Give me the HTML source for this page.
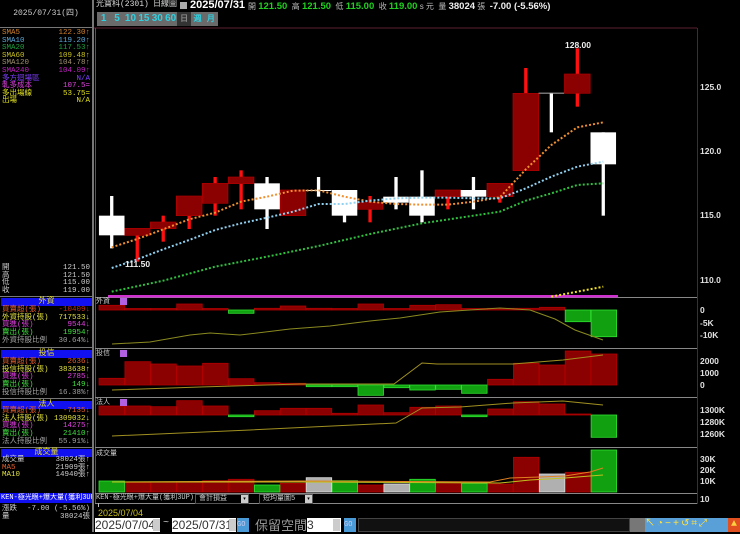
<!DOCTYPE html>
<html><head><meta charset="utf-8">
<style>
*{margin:0;padding:0;box-sizing:border-box}
body{width:740px;height:532px;background:#000;overflow:hidden;position:relative;font-family:"Liberation Mono","Noto Sans CJK TC",monospace;font-size:8px;color:#ddd}
.a{position:absolute;white-space:nowrap;line-height:8px}
.r{position:absolute;left:2px;width:88px;height:8px;line-height:8px;font-size:7.5px;white-space:nowrap}
.r span{position:absolute;right:0;top:0}
.hd{position:absolute;left:1px;width:91px;height:8px;background:#1010f0;color:#e8e020;text-align:center;font-size:8px;line-height:8px}
.btn{position:absolute;top:12px;height:14px;width:13.4px;background:#6a6a6a;color:#30d0e0;font:bold 10px "Liberation Sans",sans-serif;text-align:center;line-height:14px}
.ax{position:absolute;left:700px;font:bold 8.5px "Liberation Sans",sans-serif;color:#e0e0e0;line-height:9px}
</style></head><body>

<!-- left panel -->
<div class="a" style="left:0;top:10px;width:92px;text-align:center;color:#ccc;font-size:8px">2025/07/31(四)</div>
<div class="a" style="left:0;top:27px;width:93px;height:1px;background:#777"></div>
<div class="a" style="left:92px;top:0;width:2px;height:532px;background:#777"></div>

<div class="r" style="top:29px;color:#d08030">SMA5<span>122.30↑</span></div>
<div class="r" style="top:37px;color:#5aa8d8">SMA10<span>119.20↑</span></div>
<div class="r" style="top:44px;color:#20a040">SMA20<span>117.53↑</span></div>
<div class="r" style="top:52px;color:#c8c020">SMA60<span>109.48↑</span></div>
<div class="r" style="top:59px;color:#a09070">SMA120<span>104.78↑</span></div>
<div class="r" style="top:67px;color:#c020c0">SMA240<span>104.09↑</span></div>
<div class="r" style="top:75px;color:#8040ff">多方迴場區<span>N/A</span></div>
<div class="r" style="top:82px;color:#e040e0">軋多成本<span>107.5=</span></div>
<div class="r" style="top:90px;color:#e0e020">多出場線<span>53.75=</span></div>
<div class="r" style="top:97px;color:#e0e020">出場<span>N/A</span></div>

<div class="r" style="top:264px;color:#ccc">開<span>121.50</span></div>
<div class="r" style="top:272px;color:#ccc">高<span>121.50</span></div>
<div class="r" style="top:279px;color:#ccc">低<span>115.00</span></div>
<div class="r" style="top:287px;color:#ccc">收<span>119.00</span></div>
<div class="a" style="left:0;top:296px;width:92px;height:1px;background:#777"></div>

<div class="hd" style="top:298px">外資</div>
<div class="r" style="top:306px;color:#e06030">買賣超(張)<span style="color:#c03020">-10409↓</span></div>
<div class="r" style="top:314px;color:#e0e040">外資持股(張)<span style="color:#e0e040">717533↓</span></div>
<div class="r" style="top:321px;color:#e040e0">買進(張)<span>9544↓</span></div>
<div class="r" style="top:329px;color:#40e040">賣出(張)<span>19954↑</span></div>
<div class="r" style="top:337px;color:#a0a0a0">外資持股比例<span>30.64%↓</span></div>
<div class="a" style="left:0;top:347px;width:92px;height:1px;background:#777"></div>

<div class="hd" style="top:350px">投信</div>
<div class="r" style="top:358px;color:#e06030">買賣超(張)<span>2636↓</span></div>
<div class="r" style="top:366px;color:#e0e040">投信持股(張)<span>383638↑</span></div>
<div class="r" style="top:373px;color:#e040e0">買進(張)<span>2785↓</span></div>
<div class="r" style="top:381px;color:#40e040">賣出(張)<span>149↓</span></div>
<div class="r" style="top:389px;color:#a0a0a0">投信持股比例<span>16.38%↑</span></div>
<div class="a" style="left:0;top:398px;width:92px;height:1px;background:#777"></div>

<div class="hd" style="top:401px">法人</div>
<div class="r" style="top:407px;color:#e06030">買賣超(張)<span>-7135↓</span></div>
<div class="r" style="top:415px;color:#e0e040">法人持股(張)<span>1309032↓</span></div>
<div class="r" style="top:422px;color:#e040e0">買進(張)<span>14275↑</span></div>
<div class="r" style="top:430px;color:#40e040">賣出(張)<span>21410↑</span></div>
<div class="r" style="top:438px;color:#a0a0a0">法人持股比例<span>55.91%↓</span></div>
<div class="a" style="left:0;top:447px;width:92px;height:1px;background:#777"></div>

<div class="hd" style="top:449px">成交量</div>
<div class="r" style="top:456px;color:#ccc">成交量<span>38024張↑</span></div>
<div class="r" style="top:464px;color:#e06030">MA5<span style="color:#ccc">21909張↑</span></div>
<div class="r" style="top:471px;color:#e0e040">MA10<span style="color:#ccc">14940張↑</span></div>

<div class="a" style="left:0;top:493px;width:92px;height:10px;background:#1010f0;color:#fff;font-size:7px;line-height:10px;padding-left:1px;overflow:hidden">KEN-極光眼+爆大量(獲利3UP)</div>
<div class="r" style="top:505px;color:#ccc">漲跌<span>-7.00 (-5.56%)</span></div>
<div class="r" style="top:513px;color:#ccc">量<span>38024張</span></div>

<!-- header -->
<div class="a" style="left:96px;top:1px;color:#ddd;font-size:8px">光寶科(2301)</div>
<div class="a" style="left:153px;top:1px;color:#ddd;font-size:8px">日線圖</div>
<div class="a" style="left:180px;top:2px;width:7px;height:7px;background:#aaa"></div>
<div class="a" style="left:190px;top:0px;color:#fff;font:bold 11px 'Liberation Sans',sans-serif;line-height:11px">2025/07/31</div>
<div class="a" style="left:248px;top:1px;font:8px 'Liberation Sans','Noto Sans CJK TC',sans-serif;color:#bbb">開 <b style="color:#20d020;font-size:9.5px">121.50</b>&nbsp; 高 <b style="color:#20d020;font-size:9.5px">121.50</b>&nbsp; 低 <b style="color:#20d020;font-size:9.5px">115.00</b>&nbsp; 收 <b style="color:#20d020;font-size:9.5px">119.00</b> s 元&nbsp; 量 <b style="color:#eee;font-size:9.5px">38024</b> 張&nbsp; <b style="color:#eee;font-size:9.5px">-7.00 (-5.56%)</b></div>

<div class="btn" style="left:97px">1</div>
<div class="btn" style="left:110.4px">5</div>
<div class="btn" style="left:123.8px">10</div>
<div class="btn" style="left:137.2px">15</div>
<div class="btn" style="left:150.6px">30</div>
<div class="btn" style="left:164px">60</div>
<div class="btn" style="left:177.4px;background:#333;color:#888;font-size:8px">日</div>
<div class="btn" style="left:190.8px;font-size:8px">週</div>
<div class="btn" style="left:204.2px;font-size:8px">月</div>

<!-- axis labels -->
<div class="ax" style="top:83px">125.0</div>
<div class="ax" style="top:147px">120.0</div>
<div class="ax" style="top:211px">115.0</div>
<div class="ax" style="top:276px">110.0</div>
<div class="ax" style="top:306px">0</div>
<div class="ax" style="top:319px">-5K</div>
<div class="ax" style="top:331px">-10K</div>
<div class="ax" style="top:357px">2000</div>
<div class="ax" style="top:369px">1000</div>
<div class="ax" style="top:381px">0</div>
<div class="ax" style="top:406px">1300K</div>
<div class="ax" style="top:418px">1280K</div>
<div class="ax" style="top:430px">1260K</div>
<div class="ax" style="top:455px">30K</div>
<div class="ax" style="top:466px">20K</div>
<div class="ax" style="top:477px">10K</div>
<div class="ax" style="top:495px">10</div>

<svg class="a" style="left:0;top:0" width="740" height="532" viewBox="0 0 740 532">
 <line x1="94" y1="28" x2="697" y2="28" stroke="#5a2030"/>
 <line x1="95.5" y1="28" x2="95.5" y2="504" stroke="#555"/>
 <line x1="697.5" y1="28" x2="697.5" y2="504" stroke="#5a2030"/>
 <line x1="95" y1="297.5" x2="697" y2="297.5" stroke="#888"/>
 <line x1="95" y1="348.5" x2="697" y2="348.5" stroke="#888"/>
 <line x1="95" y1="397.5" x2="697" y2="397.5" stroke="#888"/>
 <line x1="95" y1="447.5" x2="697" y2="447.5" stroke="#888"/>
 <line x1="95" y1="493.5" x2="697" y2="493.5" stroke="#888"/>
 <line x1="95" y1="503.5" x2="697" y2="503.5" stroke="#888"/>
 <rect x="108" y="295" width="510" height="2.5" fill="#d030d0"/>

 <g transform="translate(94,30) scale(0.41203,0.33333)">
  <g fill="#ff1010">
   <rect x="101" y="595" width="8" height="100"/>
   <rect x="164" y="557" width="8" height="78"/>
   <rect x="227" y="498" width="8" height="99"/>
   <rect x="290" y="441" width="8" height="116"/>
   <rect x="353" y="421" width="8" height="117"/>
   <rect x="479" y="480" width="8" height="77"/>
   <rect x="666" y="498" width="8" height="79"/>
   <rect x="855" y="480" width="8" height="58"/>
   <rect x="981" y="460" width="8" height="58"/>
   <rect x="1044" y="114" width="8" height="308"/>
   <rect x="1169" y="55" width="8" height="175"/>
  </g>
  <g fill="#8b0000" stroke="#b00000" stroke-width="2">
   <rect x="74" y="595" width="62" height="21"/>
   <rect x="137" y="576" width="62" height="20"/>
   <rect x="200" y="498" width="62" height="59"/>
   <rect x="263" y="460" width="62" height="60"/>
   <rect x="326" y="441" width="62" height="20"/>
   <rect x="452" y="480" width="62" height="77"/>
   <rect x="639" y="518" width="62" height="20"/>
   <rect x="828" y="480" width="62" height="20"/>
   <rect x="954" y="460" width="62" height="40"/>
   <rect x="1017" y="190" width="62" height="232"/>
   <rect x="1142" y="132" width="62" height="58"/>
  </g>
  <g fill="#ffffff">
   <rect x="39" y="498" width="8" height="157"/><rect x="12" y="557" width="62" height="59"/>
   <rect x="416" y="441" width="8" height="156"/><rect x="389" y="460" width="62" height="78"/>
   <rect x="541" y="441" width="8" height="59"/><rect x="514" y="480" width="62" height="3"/>
   <rect x="604" y="480" width="8" height="97"/><rect x="577" y="480" width="62" height="77"/>
   <rect x="729" y="441" width="8" height="97"/><rect x="702" y="500" width="62" height="18"/>
   <rect x="792" y="421" width="8" height="156"/><rect x="765" y="500" width="62" height="57"/>
   <rect x="917" y="441" width="8" height="97"/><rect x="890" y="480" width="62" height="20"/>
   <rect x="1106" y="190" width="8" height="117"/><rect x="1079" y="188" width="62" height="3" fill="#aaa"/>
   <rect x="1232" y="307" width="8" height="250"/><rect x="1205" y="307" width="62" height="96"/>
  </g>
  <g fill="none" stroke-width="2" stroke-dasharray="2 2">
   <polyline vector-effect="non-scaling-stroke" stroke="#f09030" points="43,652 105,627 168,598 231,568 294,548 357,515 420,500 483,482 545,481 608,500 670,515 733,522 796,524 859,524 921,515 985,502 1048,418 1110,345 1173,292 1236,277"/>
   <polyline vector-effect="non-scaling-stroke" stroke="#90d0f0" points="43,714 105,688 168,658 231,630 294,600 357,580 420,563 483,545 545,522 608,522 670,512 733,505 796,503 859,503 921,505 985,505 1048,475 1110,440 1173,410 1236,395"/>
   <polyline vector-effect="non-scaling-stroke" stroke="#30c040" points="43,785 168,752 294,710 420,680 545,648 670,612 796,580 921,557 985,545 1048,512 1110,490 1173,465 1236,460"/>
   <polyline vector-effect="non-scaling-stroke" stroke="#f0e020" points="1110,800 1236,770"/>
  </g>
 </g>
 <text x="565" y="48" fill="#eee" font-family="Liberation Sans" font-size="8.5" font-weight="bold">128.00</text>
 <text x="125" y="267" fill="#eee" font-family="Liberation Sans" font-size="8.5" font-weight="bold">111.50</text>

 <g fill="#8b0000" stroke="#b00000" stroke-width="0.8">
  <rect x="99" y="305.3" width="25.5" height="4.7"/><rect x="124.9" y="308.5" width="25.5" height="1.5"/>
  <rect x="150.8" y="308.5" width="25.5" height="1.5"/><rect x="176.7" y="304" width="25.5" height="6"/>
  <rect x="202.6" y="308.5" width="25.5" height="1.5"/><rect x="254.4" y="308.3" width="25.5" height="1.7"/>
  <rect x="280.3" y="306" width="25.5" height="4"/><rect x="306.2" y="308.3" width="25.5" height="1.7"/>
  <rect x="332.1" y="308.5" width="25.5" height="1.5"/><rect x="358" y="304" width="25.5" height="6"/>
  <rect x="383.9" y="308.5" width="25.5" height="1.5"/><rect x="409.8" y="305.3" width="25.5" height="4.7"/>
  <rect x="435.7" y="304.7" width="25.5" height="5.3"/><rect x="461.6" y="308.5" width="25.5" height="1.5"/>
  <rect x="487.5" y="308.3" width="25.5" height="1.7"/><rect x="513.4" y="308.3" width="25.5" height="1.7"/>
  <rect x="539.3" y="307.3" width="25.5" height="2.7"/>
 </g>
 <g fill="#10a010" stroke="#30e030" stroke-width="0.8">
  <rect x="228.5" y="310" width="25.5" height="3.3"/>
  <rect x="565.2" y="310" width="25.5" height="11.7"/>
  <rect x="591.1" y="310" width="25.5" height="26.7"/>
 </g>
 <polyline fill="none" stroke="#8a8a20" stroke-width="1" points="112,344 150,342 190,335 210,333 240,335 290,329 330,326 370,321 400,318 440,312 500,308 530,310 555,319 575,330 603,340"/>

 <g fill="#8b0000" stroke="#b00000" stroke-width="0.8">
  <rect x="99" y="378.3" width="25.5" height="6.7"/><rect x="124.9" y="361.7" width="25.5" height="23.3"/>
  <rect x="150.8" y="364" width="25.5" height="21"/><rect x="176.7" y="366" width="25.5" height="19"/>
  <rect x="202.6" y="363.3" width="25.5" height="21.7"/><rect x="228.5" y="378.7" width="25.5" height="6.3"/>
  <rect x="254.4" y="382.7" width="25.5" height="2.3"/><rect x="280.3" y="383.3" width="25.5" height="1.7"/>
  <rect x="487.5" y="379.3" width="25.5" height="5.7"/><rect x="513.4" y="363.3" width="25.5" height="21.7"/>
  <rect x="539.3" y="365" width="25.5" height="20"/><rect x="565.2" y="351" width="25.5" height="34"/>
  <rect x="591.1" y="354" width="25.5" height="31"/>
 </g>
 <g fill="#10a010" stroke="#30e030" stroke-width="0.8">
  <rect x="306.2" y="385" width="25.5" height="1.7"/><rect x="332.1" y="385" width="25.5" height="1.7"/>
  <rect x="358" y="385" width="25.5" height="10.3"/><rect x="383.9" y="385" width="25.5" height="2.7"/>
  <rect x="409.8" y="385" width="25.5" height="5"/><rect x="435.7" y="385" width="25.5" height="4.3"/>
  <rect x="461.6" y="385" width="25.5" height="8.3"/>
 </g>
 <polyline fill="none" stroke="#a09020" stroke-width="1" points="112,390 200,387 300,384 394,384 422,363 437,364 513,364 563,360 603,355"/>

 <g fill="#8b0000" stroke="#b00000" stroke-width="0.8">
  <rect x="99" y="406" width="25.5" height="9"/><rect x="124.9" y="406" width="25.5" height="9"/>
  <rect x="150.8" y="406.7" width="25.5" height="8.3"/><rect x="176.7" y="400.7" width="25.5" height="14.3"/>
  <rect x="202.6" y="406" width="25.5" height="9"/><rect x="254.4" y="410.7" width="25.5" height="4.3"/>
  <rect x="280.3" y="408.3" width="25.5" height="6.7"/><rect x="306.2" y="408.3" width="25.5" height="6.7"/>
  <rect x="332.1" y="413.3" width="25.5" height="1.7"/><rect x="358" y="405" width="25.5" height="10"/>
  <rect x="383.9" y="412.7" width="25.5" height="2.3"/><rect x="409.8" y="407.3" width="25.5" height="7.7"/>
  <rect x="435.7" y="406" width="25.5" height="9"/><rect x="487.5" y="409" width="25.5" height="6"/>
  <rect x="513.4" y="401.7" width="25.5" height="13.3"/><rect x="539.3" y="404" width="25.5" height="11"/>
  <rect x="565.2" y="414" width="25.5" height="1"/>
 </g>
 <g fill="#10a010" stroke="#30e030" stroke-width="0.8">
  <rect x="228.5" y="415" width="25.5" height="1.7"/><rect x="461.6" y="415" width="25.5" height="1.7"/>
  <rect x="591.1" y="415" width="25.5" height="22.3"/>
 </g>
 <polyline fill="none" stroke="#a09020" stroke-width="1" points="112,436 250,430 396,423 422,408 460,407 513,403 563,401 603,405"/>

 <g fill="#8b0000" stroke="#b00000" stroke-width="0.8">
  <rect x="124.9" y="482.7" width="25.5" height="9.3"/><rect x="150.8" y="482" width="25.5" height="10"/>
  <rect x="176.7" y="481.7" width="25.5" height="10.3"/><rect x="202.6" y="480.7" width="25.5" height="11.3"/>
  <rect x="228.5" y="479.3" width="25.5" height="12.7"/><rect x="280.3" y="483.3" width="25.5" height="8.7"/>
  <rect x="358" y="485" width="25.5" height="7"/><rect x="435.7" y="482" width="25.5" height="10"/>
  <rect x="487.5" y="484" width="25.5" height="8"/><rect x="513.4" y="457.3" width="25.5" height="34.7"/>
  <rect x="565.2" y="472.3" width="25.5" height="19.7"/>
 </g>
 <g fill="#10a010" stroke="#30e030" stroke-width="0.8">
  <rect x="99" y="481" width="25.5" height="11"/><rect x="254.4" y="485" width="25.5" height="7"/>
  <rect x="332.1" y="480.7" width="25.5" height="11.3"/><rect x="409.8" y="479.3" width="25.5" height="12.7"/>
  <rect x="461.6" y="483.3" width="25.5" height="8.7"/><rect x="591.1" y="450" width="25.5" height="42"/>
 </g>
 <g fill="#b0b0b0" stroke="#ddd" stroke-width="0.8">
  <rect x="306.2" y="477.7" width="25.5" height="14.3"/><rect x="383.9" y="484" width="25.5" height="8"/>
  <rect x="539.3" y="474" width="25.5" height="18"/>
 </g>
 <polyline fill="none" stroke="#e08020" stroke-width="1" points="112,482 300,481 490,482 510,478 540,477 565,476 590,472 603,468"/>
 <polyline fill="none" stroke="#c0c020" stroke-width="1" points="112,482 300,482 500,483 530,480 565,478 590,476 603,475"/>

 <rect x="120" y="298" width="7" height="7" fill="#b060e0"/>
 <rect x="120" y="350" width="7" height="7" fill="#b060e0"/>
 <rect x="120" y="399" width="7" height="7" fill="#b060e0"/>
</svg>

<div class="a" style="left:96px;top:298px;font-size:7px;color:#ccc">外資</div>
<div class="a" style="left:96px;top:350px;font-size:7px;color:#ccc">投信</div>
<div class="a" style="left:96px;top:399px;font-size:7px;color:#ccc">法人</div>
<div class="a" style="left:96px;top:450px;font-size:7px;color:#ccc">成交量</div>

<div class="a" style="left:96px;top:494px;font-size:7px;color:#ccc">KEN-極光眼+爆大量(獲利3UP)</div>
<div class="a" style="left:195px;top:494px;width:54px;height:10px;border:1px solid #555;font-size:7px;color:#ccc;line-height:8px;padding-left:3px">會計損益<span style="position:absolute;right:0;top:0;width:7px;height:8px;background:#ccc;color:#000;font-size:5px;text-align:center">▾</span></div>
<div class="a" style="left:259px;top:494px;width:54px;height:10px;border:1px solid #555;font-size:7px;color:#ccc;line-height:8px;padding-left:3px">短均量圖5<span style="position:absolute;right:0;top:0;width:7px;height:8px;background:#ccc;color:#000;font-size:5px;text-align:center">▾</span></div>
<div class="a" style="left:98px;top:503px;width:1px;height:4px;background:#bbb"></div>
<div class="a" style="left:98px;top:508px;color:#c8c020;font:9px 'Liberation Sans',sans-serif">2025/07/04</div>

<div class="a" style="left:95px;top:518px;width:65px;height:14px;background:#fff;color:#333;font:12px 'Liberation Sans',sans-serif;line-height:14px;overflow:hidden">2025/07/04</div>
<div class="a" style="left:153px;top:519px;width:7px;height:12px;background:#ccc"></div>
<div class="a" style="left:163px;top:520px;color:#ccc;font-size:10px">~</div>
<div class="a" style="left:172px;top:518px;width:64px;height:14px;background:#fff;color:#333;font:12px 'Liberation Sans',sans-serif;line-height:14px;overflow:hidden">2025/07/31</div>
<div class="a" style="left:229px;top:519px;width:7px;height:12px;background:#ccc"></div>
<div class="a" style="left:237px;top:518px;width:12px;height:14px;background:#4a9ad8;color:#cce;font-size:7px;line-height:14px">GO</div>
<div class="a" style="left:255px;top:518px;color:#999;font:13px 'Noto Sans CJK TC',sans-serif;line-height:14px">保留空間</div>
<div class="a" style="left:307px;top:518px;width:34px;height:14px;background:#fff;color:#333;font:12px 'Liberation Sans',sans-serif;line-height:14px">3</div>
<div class="a" style="left:333px;top:519px;width:7px;height:12px;background:#ccc"></div>
<div class="a" style="left:344px;top:518px;width:12px;height:14px;background:#4a9ad8;color:#cce;font-size:7px;line-height:14px">GO</div>
<div class="a" style="left:358px;top:518px;width:272px;height:14px;background:#111;border:1px solid #444"></div>
<div class="a" style="left:630px;top:518px;width:15px;height:14px;background:#777"></div>
<div class="a" style="left:645px;top:518px;width:83px;height:14px;background:#5aa0d8;color:#fff;font-size:10px;line-height:14px;letter-spacing:2px"><span style="color:#ffe040"> ↖◔−+↺⌗⤢</span></div>
<div class="a" style="left:728px;top:518px;width:12px;height:14px;background:#e05020;color:#ffd040;font-size:10px;line-height:14px;text-align:center">▲</div>
</body></html>
